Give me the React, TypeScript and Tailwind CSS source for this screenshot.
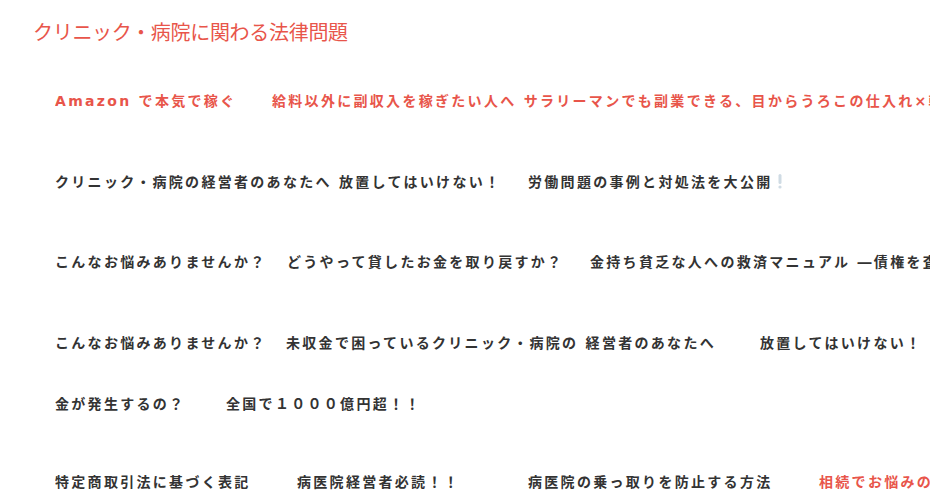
import React from "react";

const font = { fontFamily: '"DejaVu Sans", "Noto Sans CJK JP", sans-serif' };

function Exclaim() {
  return (
    <svg width="6" height="16" viewBox="0 0 6 16" className="inline-block align-[-2px] ml-[4px]">
      <rect x="1.5" y="1" width="3" height="10" rx="1.5" fill="#cfdbe4" />
      <circle cx="3" cy="14" r="1.6" fill="#cfdbe4" />
    </svg>
  );
}

export default function App() {
  const seg = "shrink-0 whitespace-nowrap";
  return (
    <div
      className="w-[930px] h-[500px] overflow-hidden bg-white"
      style={{ fontFamily: '"Noto Sans CJK JP", sans-serif' }}
    >
      <h1 className="pt-[18px] pl-[33px] text-[20px] leading-[28px] font-normal text-[#e8554a] tracking-[-0.3px]">
        クリニック・病院に関わる法律問題
      </h1>

      <div
        className="pl-[55px] text-[14px] leading-[20px] font-bold tracking-[2.3px] text-[#333333]"
        style={font}
      >
        <div className="mt-[45px] flex overflow-hidden text-[#e8554a]">
          <span className={`${seg} w-[217px]`}>Amazon で本気で稼ぐ</span>
          <span className={seg}>
            給料以外に副収入を稼ぎたい人へ サラリーマンでも副業できる、目からうろこの仕入れ×転売ビジネス
          </span>
        </div>

        <div className="mt-[61px] flex overflow-hidden">
          <span className={`${seg} w-[473px]`}>クリニック・病院の経営者のあなたへ 放置してはいけない！</span>
          <span className={seg}>
            労働問題の事例と対処法を大公開
            <Exclaim />
          </span>
        </div>

        <div className="mt-[60px] flex overflow-hidden">
          <span className={`${seg} w-[232px]`}>こんなお悩みありませんか？</span>
          <span className={`${seg} w-[303px]`}>どうやって貸したお金を取り戻すか？</span>
          <span className={seg}>金持ち貧乏な人への救済マニュアル ―債権を査定します―</span>
        </div>

        <div className="mt-[61px] flex overflow-hidden">
          <span className={`${seg} w-[231px]`}>こんなお悩みありませんか？</span>
          <span className={`${seg} w-[474px]`}>未収金で困っているクリニック・病院の 経営者のあなたへ</span>
          <span className={seg}>放置してはいけない！</span>
        </div>

        <div className="mt-[41px] flex overflow-hidden">
          <span className={`${seg} w-[171px]`}>金が発生するの？</span>
          <span className={seg}>全国で１０００億円超！！</span>
        </div>

        <div className="mt-[58px] flex overflow-hidden">
          <span className={`${seg} w-[242px]`}>特定商取引法に基づく表記</span>
          <span className={`${seg} w-[231px]`}>病医院経営者必読！！</span>
          <span className={`${seg} w-[291px]`}>病医院の乗っ取りを防止する方法</span>
          <span className={`${seg} text-[#e8554a]`}>相続でお悩みの方へ</span>
        </div>
      </div>
    </div>
  );
}
